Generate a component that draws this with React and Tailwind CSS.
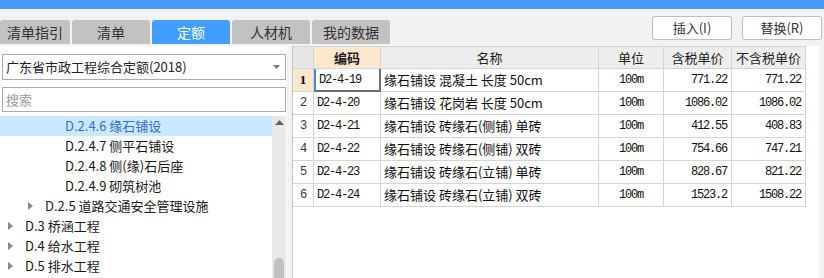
import React from 'react'

const rows = [
  { no: 1, code: 'D2-4-19', name: '缘石铺设 混凝土 长度 50cm', unit: '100m', tax: '771.22', notax: '771.22' },
  { no: 2, code: 'D2-4-20', name: '缘石铺设 花岗岩 长度 50cm', unit: '100m', tax: '1086.02', notax: '1086.02' },
  { no: 3, code: 'D2-4-21', name: '缘石铺设 砖缘石(侧铺) 单砖', unit: '100m', tax: '412.55', notax: '408.83' },
  { no: 4, code: 'D2-4-22', name: '缘石铺设 砖缘石(侧铺) 双砖', unit: '100m', tax: '754.66', notax: '747.21' },
  { no: 5, code: 'D2-4-23', name: '缘石铺设 砖缘石(立铺) 单砖', unit: '100m', tax: '828.67', notax: '821.22' },
  { no: 6, code: 'D2-4-24', name: '缘石铺设 砖缘石(立铺) 双砖', unit: '100m', tax: '1523.2', notax: '1508.22' },
]

const tree = [
  { label: 'D.2.4.6 缘石铺设', pad: 'pl-[65px]', active: true },
  { label: 'D.2.4.7 侧平石铺设', pad: 'pl-[65px]' },
  { label: 'D.2.4.8 侧(缘)石后座', pad: 'pl-[65px]' },
  { label: 'D.2.4.9 砌筑树池', pad: 'pl-[65px]' },
  { label: 'D.2.5 道路交通安全管理设施', pad: 'pl-[28px]', arrow: true },
  { label: 'D.3 桥涵工程', pad: 'pl-[8px]', arrow: true },
  { label: 'D.4 给水工程', pad: 'pl-[8px]', arrow: true },
  { label: 'D.5 排水工程', pad: 'pl-[8px]', arrow: true },
]

const tabs = ['清单指引', '清单', '定额', '人材机', '我的数据']

function Arrow() {
  return (
    <svg width="5" height="8" viewBox="0 0 5 8" className="mr-[12px] shrink-0">
      <polygon points="0,0 5,4 0,8" fill="#8a8a8a" />
    </svg>
  )
}

export default function App() {
  const cjk = "font-['Microsoft_YaHei','Noto_Sans_CJK_SC',sans-serif]"
  const mono = "font-['Liberation_Mono','Noto_Sans_CJK_SC',monospace] text-[12px] tracking-[-1.2px]"
  const cell = 'border-r border-b border-[#d4d4d4] flex items-center'

  return (
    <div className={`w-[824px] h-[278px] bg-[#f2f2f2] overflow-hidden flex flex-col ${cjk}`}>
      <div className="h-[9px] bg-[#4499ff] shrink-0" />

      {/* tabs + buttons */}
      <div className="h-[37px] flex shrink-0">
        <div className="flex gap-[2px] pt-[11px] pb-[2px]">
          {tabs.map((t) => (
            <div
              key={t}
              className={`h-[24px] flex items-center justify-center rounded-t-[3px] text-[14px] ${
                t === '清单指引' ? 'w-[70px]' : 'w-[78px]'
              } ${t === '定额' ? 'bg-[#409eff] text-white' : 'bg-[#c2c2c2] text-[#333]'}`}
            >
              {t}
            </div>
          ))}
        </div>
        <div className="flex-1" />
        <div className="flex gap-[10px] pt-[7px] pr-[2px]">
          <button className="w-[80px] h-[24px] bg-white border border-[#bdbdbd] rounded-[3px] text-[13px] text-[#333]">插入(I)</button>
          <button className="w-[80px] h-[24px] bg-white border border-[#bdbdbd] rounded-[3px] text-[13px] text-[#333]">替换(R)</button>
        </div>
      </div>

      {/* content */}
      <div className="flex flex-1 min-h-0">
        {/* left panel */}
        <div className="w-[287px] bg-white flex flex-col">
          <div className="mt-[8px] ml-[2px] w-[284px] h-[26px] border border-[#ababab] flex items-center px-[3px] text-[13px] text-[#222]">
            <span className="flex-1">广东省市政工程综合定额(2018)</span>
            <svg width="7" height="4" viewBox="0 0 7 4" className="mr-[2px]">
              <polygon points="0,0 7,0 3.5,4" fill="#777" />
            </svg>
          </div>
          <div className="mt-[7px] ml-[2px] w-[284px] h-[25px] border border-[#ababab] flex items-center px-[3px] text-[13px] text-[#9a9a9a]">
            搜索
          </div>
          <div className="mt-[4px] flex flex-1 min-h-0">
            <div className="flex-1 flex flex-col">
              {tree.map((n) => (
                <div
                  key={n.label}
                  className={`h-[20px] shrink-0 flex items-center text-[13px] ${n.pad} ${
                    n.active ? 'bg-[#cce8ff] text-[#2f6fd1]' : 'text-[#1a1a1a]'
                  }`}
                >
                  {n.arrow && <Arrow />}
                  {n.label}
                </div>
              ))}
            </div>
            <div className="w-[14px] bg-[#e8e8e8] flex flex-col items-center mr-[1px]">
              <svg width="9" height="5" viewBox="0 0 9 5" className="mt-[4px]">
                <polygon points="0,5 9,5 4.5,0" fill="#606060" />
              </svg>
              <div className="flex-1" />
              <div className="w-[10px] h-[20px] bg-[#c1c1c1] rounded-t-[5px]" />
            </div>
          </div>
        </div>

        <div className="w-[5px]" />

        {/* table panel */}
        <div className="w-[527px] bg-white border-l border-[#c4c4c4] flex flex-col">
          <div className="grid grid-cols-[21px_67px_218px_65px_68px_74px] auto-rows-[23px] w-[513px]">
            <div className={`${cell} bg-[#e6e6e6] border-t`} />
            <div className={`${cell} bg-[#fde7cd] border-t justify-center text-[13px] font-bold text-[#222]`}>编码</div>
            <div className={`${cell} bg-[#ededed] border-t justify-center text-[13px] text-[#222]`}>名称</div>
            <div className={`${cell} bg-[#ededed] border-t justify-center text-[13px] text-[#222]`}>单位</div>
            <div className={`${cell} bg-[#ededed] border-t justify-center text-[13px] text-[#222]`}>含税单价</div>
            <div className={`${cell} bg-[#ededed] border-t justify-center text-[13px] text-[#222]`}>不含税单价</div>
            {rows.map((r) => (
              <React.Fragment key={r.no}>
                <div
                  className={`${cell} justify-center ${
                    r.no === 1
                      ? "bg-[#fde7cd] font-bold text-[13px] font-['Liberation_Serif',serif]"
                      : `${mono} text-[#333]`
                  }`}
                >
                  {r.no}
                </div>
                <div
                  className={`${cell} ${mono} text-[#111] pl-[3px] ${
                    r.no === 1 ? 'border-l-2 border-l-[#3a8ee6] border-r-2 border-r-[#6e6e6e] border-b-2 border-b-[#6e6e6e]' : ''
                  }`}
                >
                  {r.code}
                </div>
                <div className={`${cell} text-[13px] text-[#111] pl-[3px] whitespace-pre`}>{r.name}</div>
                <div className={`${cell} ${mono} text-[#111] justify-center`}>{r.unit}</div>
                <div className={`${cell} ${mono} text-[#111] justify-end pr-[4px]`}>{r.tax}</div>
                <div className={`${cell} ${mono} text-[#111] justify-end pr-[4px]`}>{r.notax}</div>
              </React.Fragment>
            ))}
          </div>
        </div>
      </div>
    </div>
  )
}
